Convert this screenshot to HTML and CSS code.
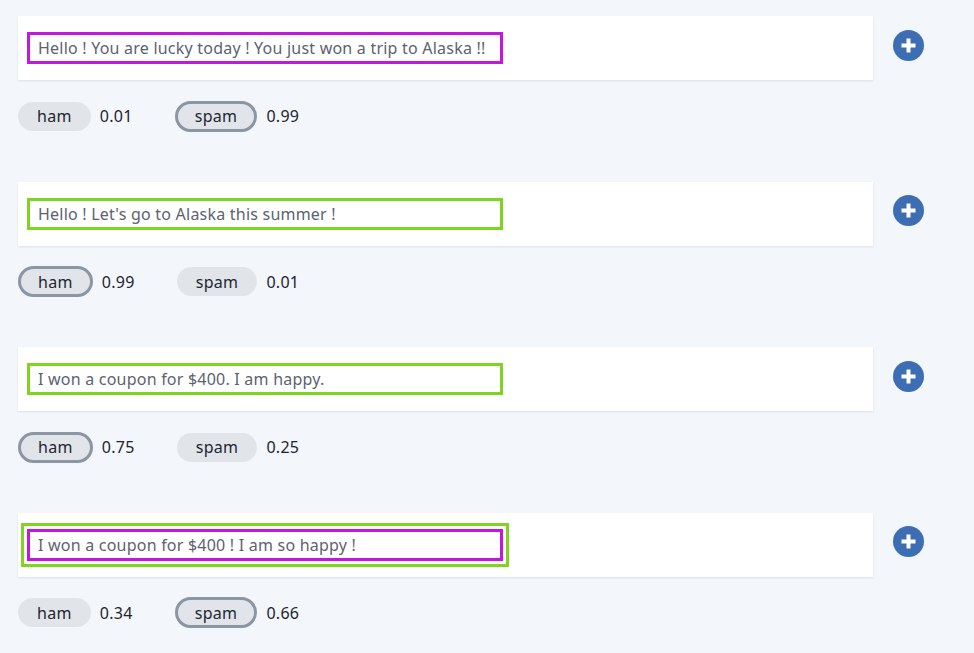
FILE: index.html
```html
<!DOCTYPE html>
<html>
<head>
<meta charset="utf-8">
<link rel="stylesheet" href="styles.css">
</head>
<body>
<div class="page">
  <div class="item">
    <div class="line">
      <div class="card">
        <div class="box box-spam">Hello ! You are lucky today ! You just won a trip to Alaska !!</div>
      </div>
      <button class="add" aria-label="add"><svg width="31" height="31" viewBox="0 0 31 31"><circle cx="15.5" cy="15.5" r="15.5" fill="#3d6db3"/><rect x="8.5" y="13.5" width="14" height="4" fill="#fff"/><rect x="13.5" y="8.5" width="4" height="14" fill="#fff"/></svg></button>
    </div>
    <div class="labels">
      <span class="pill">ham</span><span class="val">0.01</span>
      <span class="pill sel">spam</span><span class="val">0.99</span>
    </div>
  </div>
  <div class="item">
    <div class="line">
      <div class="card">
        <div class="box box-ham">Hello ! Let's go to Alaska this summer !</div>
      </div>
      <button class="add" aria-label="add"><svg width="31" height="31" viewBox="0 0 31 31"><circle cx="15.5" cy="15.5" r="15.5" fill="#3d6db3"/><rect x="8.5" y="13.5" width="14" height="4" fill="#fff"/><rect x="13.5" y="8.5" width="4" height="14" fill="#fff"/></svg></button>
    </div>
    <div class="labels">
      <span class="pill sel">ham</span><span class="val">0.99</span>
      <span class="pill">spam</span><span class="val">0.01</span>
    </div>
  </div>
  <div class="item">
    <div class="line">
      <div class="card">
        <div class="box box-ham">I won a coupon for $400. I am happy.</div>
      </div>
      <button class="add" aria-label="add"><svg width="31" height="31" viewBox="0 0 31 31"><circle cx="15.5" cy="15.5" r="15.5" fill="#3d6db3"/><rect x="8.5" y="13.5" width="14" height="4" fill="#fff"/><rect x="13.5" y="8.5" width="4" height="14" fill="#fff"/></svg></button>
    </div>
    <div class="labels">
      <span class="pill sel">ham</span><span class="val">0.75</span>
      <span class="pill">spam</span><span class="val">0.25</span>
    </div>
  </div>
  <div class="item">
    <div class="line">
      <div class="card">
        <div class="box box-spam box-both">I won a coupon for $400 ! I am so happy !</div>
      </div>
      <button class="add" aria-label="add"><svg width="31" height="31" viewBox="0 0 31 31"><circle cx="15.5" cy="15.5" r="15.5" fill="#3d6db3"/><rect x="8.5" y="13.5" width="14" height="4" fill="#fff"/><rect x="13.5" y="8.5" width="4" height="14" fill="#fff"/></svg></button>
    </div>
    <div class="labels">
      <span class="pill">ham</span><span class="val">0.34</span>
      <span class="pill sel">spam</span><span class="val">0.66</span>
    </div>
  </div>
</div>
</body>
</html>
```

FILE: styles.css
```css
html, body {
  margin: 0;
  padding: 0;
  background: #f3f6fa;
}
body {
  font-family: "Noto Sans", "Open Sans", sans-serif;
  font-size: 16px;
  letter-spacing: 0.3px;
}
.page {
  padding: 16px 0 0 18px;
}
.item {
  margin-bottom: 50.67px;
}
.line {
  display: flex;
  align-items: center;
  gap: 20px;
}
.card {
  width: 855px;
  height: 64px;
  box-sizing: border-box;
  background: #ffffff;
  box-shadow: 0 1px 2px rgba(30, 45, 70, 0.10);
  display: flex;
  align-items: center;
  padding-left: 9px;
}
.box {
  width: 476px;
  height: 32px;
  box-sizing: border-box;
  border: 3px solid #c316e0;
  padding-left: 8px;
  display: flex;
  align-items: center;
  color: #5b6370;
  font-size: 16px;
  letter-spacing: 0.22px;
  white-space: nowrap;
}
.box-ham {
  border-color: #7fd321;
}
.box-spam {
  border-color: #c316e0;
}
.box-both {
  outline: 3px solid #7fd321;
  outline-offset: 3px;
}
.add {
  border: 0;
  padding: 0;
  margin-bottom: 6px;
  background: none;
  width: 31px;
  height: 31px;
  display: block;
  cursor: pointer;
}
.add svg {
  display: block;
}
.labels {
  margin-top: 21px;
  height: 30px;
  display: flex;
  align-items: center;
}
.pill {
  display: inline-flex;
  align-items: center;
  justify-content: center;
  box-sizing: border-box;
  height: 29px;
  padding: 0 17px;
  border: 2px solid #e1e5ea;
  border-radius: 15px;
  background: #e1e5ea;
  color: #1f2630;
  font-size: 16px;
}
.pill.sel {
  height: 31px;
  border: 3px solid #8a96a3;
  border-radius: 16px;
}
.val {
  margin-left: 9px;
  min-width: 36px;
  margin-right: 39px;
  color: #1d2430;
  font-size: 16px;
}
```
